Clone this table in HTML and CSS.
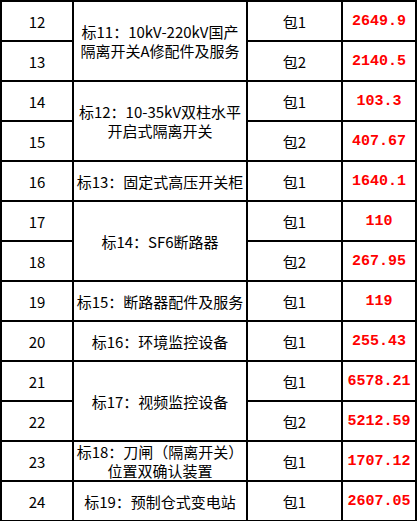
FILE: index.html
```html
<!DOCTYPE html>
<html lang="zh-CN">
<head>
<meta charset="utf-8">
<title>表</title>
<link rel="stylesheet" href="styles.css">
</head>
<body>
<div class="sheet">
  <div class="c num">12</div><div class="c name span2">标11：10kV-220kV国产<br>隔离开关A修配件及服务</div><div class="c pkg">包1</div><div class="c price">2649.9</div>
  <div class="c num">13</div><div class="c pkg">包2</div><div class="c price">2140.5</div>
  <div class="c num">14</div><div class="c name span2">标12：10-35kV双柱水平<br>开启式隔离开关</div><div class="c pkg">包1</div><div class="c price">103.3</div>
  <div class="c num">15</div><div class="c pkg">包2</div><div class="c price">407.67</div>
  <div class="c num">16</div><div class="c name">标13：固定式高压开关柜</div><div class="c pkg">包1</div><div class="c price">1640.1</div>
  <div class="c num">17</div><div class="c name span2">标14：SF6断路器</div><div class="c pkg">包1</div><div class="c price">110</div>
  <div class="c num">18</div><div class="c pkg">包2</div><div class="c price">267.95</div>
  <div class="c num">19</div><div class="c name">标15：断路器配件及服务</div><div class="c pkg">包1</div><div class="c price">119</div>
  <div class="c num">20</div><div class="c name">标16：环境监控设备</div><div class="c pkg">包1</div><div class="c price">255.43</div>
  <div class="c num">21</div><div class="c name span2">标17：视频监控设备</div><div class="c pkg">包1</div><div class="c price">6578.21</div>
  <div class="c num">22</div><div class="c pkg">包2</div><div class="c price">5212.59</div>
  <div class="c num">23</div><div class="c name">标18：刀闸（隔离开关）<br>位置双确认装置</div><div class="c pkg">包1</div><div class="c price">1707.12</div>
  <div class="c num">24</div><div class="c name">标19：预制仓式变电站</div><div class="c pkg">包1</div><div class="c price">2607.05</div>
</div>
</body>
</html>
```
FILE: styles.css
```css
html, body {
  margin: 0;
  padding: 0;
  background: #ffffff;
}
.sheet {
  display: grid;
  grid-template-columns: 70px 172px 93px 72px;
  grid-auto-rows: 38px;
  gap: 2px;
  padding: 2px;
  width: 413px;
  background: #000000;
  font-family: "Noto Sans CJK SC", sans-serif;
  font-size: 15px;
  color: #000000;
}
.c {
  background: #ffffff;
  display: flex;
  align-items: center;
  justify-content: center;
  text-align: center;
  line-height: 19px;
  white-space: nowrap;
}
.span2 {
  grid-row: span 2;
}
.price {
  font-family: "Liberation Mono", monospace;
  font-weight: bold;
  color: #ff0000;
  font-size: 15px;
}
```
